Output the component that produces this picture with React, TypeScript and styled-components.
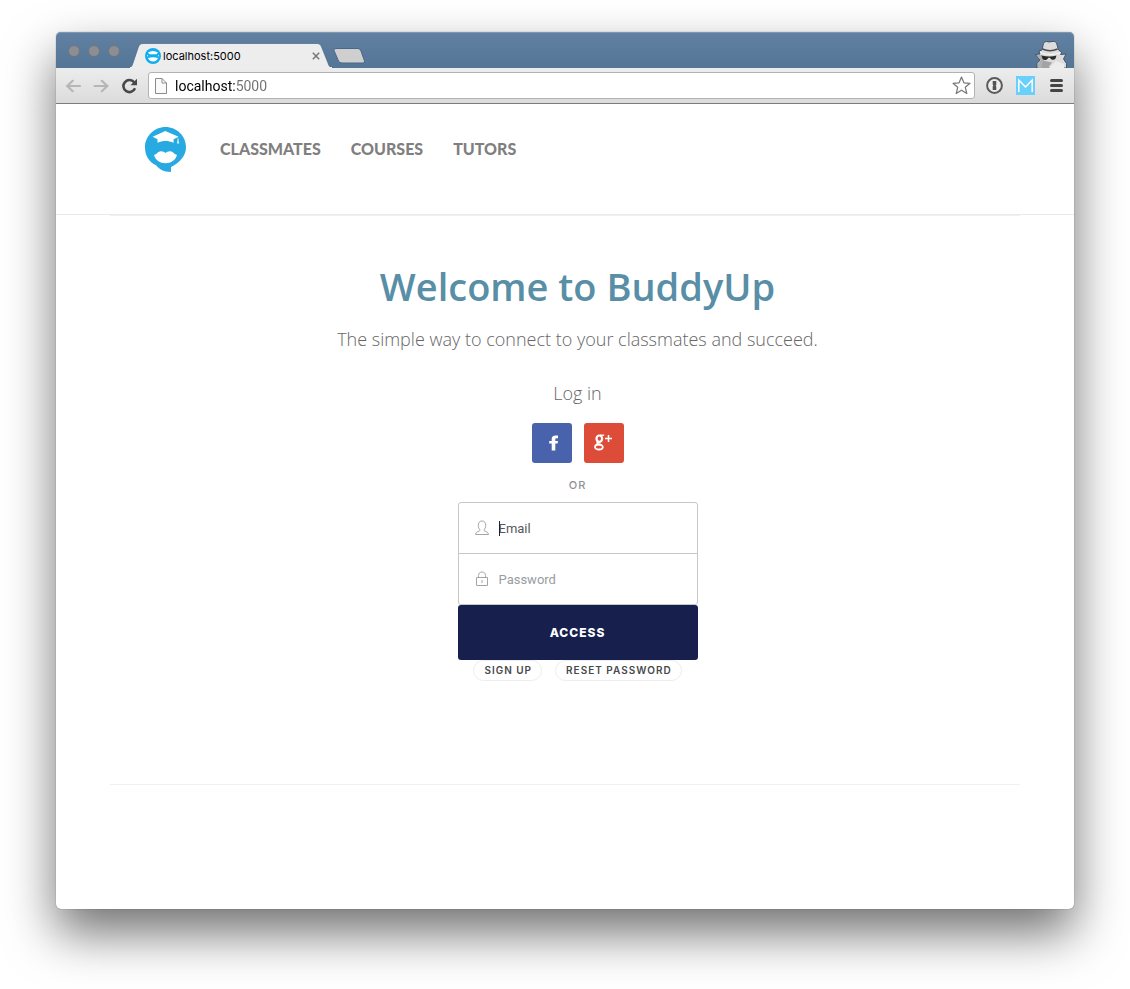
import React from 'react';
import styled, { createGlobalStyle } from 'styled-components';

const GlobalStyle = createGlobalStyle`
  *, *::before, *::after { box-sizing: border-box; }
  body { margin: 0; background: #fff; }
  button, input { font: inherit; margin: 0; padding: 0; border: 0; background: none; }
  button { cursor: pointer; }
  svg { display: block; }
`;

const Desktop = styled.div`
  display: flex;
  min-height: 100vh;
  padding: 32px 56px 80px;
  overflow: hidden;
`;

const BrowserWindow = styled.div`
  display: flex;
  flex: 1;
  flex-direction: column;
  border-radius: 5px;
  background: #fff;
  box-shadow: 0 0 1px rgba(0, 0, 0, 0.6), 0 24px 50px rgba(0, 0, 0, 0.56);
`;

const TitleBar = styled.div`
  display: flex;
  align-items: flex-end;
  height: 36px;
  padding: 0 6px 0 12px;
  border-radius: 5px 5px 0 0;
  background: linear-gradient(#6281a2, #547596);
  box-shadow: inset 0 1px #7d98b3;
`;

const WindowButtons = styled.div`
  display: flex;
  gap: 8px;
  padding-bottom: 11px;
`;

const WindowButton = styled.button`
  width: 12px;
  height: 12px;
  border: 1px solid #71757f;
  border-radius: 50%;
  background: #8d8e94;
`;

const Tab = styled.div`
  position: relative;
  display: flex;
  align-items: center;
  width: 206px;
  height: 25px;
  margin-left: 8px;
  padding: 0 14px 0 17px;
`;

const TabShape = styled.svg`
  position: absolute;
  inset: 0;
`;

const TabTitle = styled.span`
  position: relative;
  flex: 1;
  padding-left: 2px;
  color: #000;
  font: 11px/16px Inter, 'Liberation Sans', sans-serif;
`;

const TabIcon = styled.span`
  position: relative;
`;

const TabClose = styled.button`
  position: relative;
`;

const NewTab = styled.button`
  margin: 0 0 4px -1px;
`;

const Incognito = styled.span`
  margin-left: auto;
`;

const Toolbar = styled.div`
  display: flex;
  align-items: center;
  height: 36px;
  padding: 0 9px;
  border-bottom: 1px solid #7c7c7c;
  background: linear-gradient(#ededed, #dbdbdb);
`;

const Navigation = styled.div`
  display: flex;
  gap: 12px;
`;

const ToolButton = styled.button`
  flex: none;
`;

const AddressBar = styled.div`
  display: flex;
  flex: 1;
  align-items: center;
  height: 27px;
  margin: 0 11px 0 10px;
  padding: 0 3px 0 6px;
  border: 1px solid #b2b2b2;
  border-radius: 3px;
  background: #fff;
`;

const Address = styled.input`
  flex: 1;
  min-width: 0;
  height: 20px;
  margin-left: 8px;
  outline: none;
  background: linear-gradient(90deg, #000 61px, #707070 61px);
  background-clip: text;
  color: transparent;
  font: 14px/20px Roboto, 'Liberation Sans', sans-serif;
`;

const Extensions = styled.div`
  display: flex;
  align-items: center;
  gap: 13px;
`;

const Header = styled.header`
  display: flex;
  align-items: flex-start;
  height: 111px;
  padding: 23px 89px 0;
  border-bottom: 1px solid #e6ebec;
`;

const Nav = styled.nav`
  display: flex;
  gap: 30px;
  margin: 10px 0 0 34px;
`;

const NavLink = styled.a`
  color: #7f7f7f;
  font: 900 16px/24px Lato, sans-serif;
  text-decoration: none;
`;

const Main = styled.main`
  display: flex;
  flex-direction: column;
  align-items: center;
  margin: 0 54px;
  padding: 42px 0 103px 25px;
  border-top: 1px solid #f0f0f0;
  border-bottom: 1px solid #f0f0f0;
  color: #666;
  font-family: 'Open Sans', sans-serif;
`;

const Title = styled.h1`
  margin: 0;
  color: #588ea6;
  font-size: 38px;
  font-weight: 600;
  line-height: 56px;
`;

const Lead = styled.p`
  margin: 12px 0 0;
  font-size: 18px;
  font-weight: 300;
  line-height: 26px;
`;

const LoginHeading = styled.h2`
  margin: 28px 0 0;
  font-size: 18px;
  font-weight: 300;
  line-height: 26px;
`;

const SocialButtons = styled.div`
  display: flex;
  gap: 12px;
  margin-top: 17px;
`;

const SocialButton = styled.button<{ $color: string }>`
  display: grid;
  place-items: center;
  width: 40px;
  height: 40px;
  border-radius: 3px;
  background: ${(p) => p.$color};
`;

const Divider = styled.p`
  margin: 14px 0 9px;
  color: #8f9194;
  font: 500 11px/16px Inter, sans-serif;
  letter-spacing: 1px;
`;

const LoginForm = styled.form`
  display: flex;
  flex-direction: column;
  width: 240px;
  font-family: Inter, sans-serif;
`;

const Fields = styled.div`
  border: 1px solid #c6c8c8;
  border-radius: 3px;
`;

const Field = styled.label`
  position: relative;
  display: flex;
  align-items: center;
  gap: 10px;
  height: 50px;
  padding: 0 16px;

  & + & {
    height: 51px;
    border-top: 1px solid #c6c8c8;
  }
`;

const FieldInput = styled.input<{ $active?: boolean }>`
  flex: 1;
  min-width: 0;
  padding-top: 2px;
  outline: none;
  color: #444;
  font: 13px/20px Roboto, sans-serif;

  &::placeholder {
    color: ${(p) => (p.$active ? '#56585c' : '#999ca1')};
    opacity: 1;
  }
`;

const Caret = styled.span`
  position: absolute;
  left: 40px;
  width: 1px;
  height: 15px;
  background: #222;
`;

const Access = styled.button`
  height: 55px;
  border-radius: 3px;
  background: #17204d;
  color: #fff;
  font-size: 12px;
  font-weight: 800;
  line-height: 20px;
  letter-spacing: 1px;
`;

const FormLinks = styled.div`
  display: flex;
  justify-content: center;
  gap: 13px;
`;

const PillLink = styled.a`
  height: 21px;
  padding: 0 9px 0 10px;
  border: 1px solid #ededee;
  border-radius: 11px;
  color: #48494c;
  font: 600 10px/19px Inter, sans-serif;
  letter-spacing: 1px;
  text-decoration: none;
  white-space: nowrap;
`;

const BuddyLogo = () => (
  <svg width="41" height="45" viewBox="0 0 41 45" role="img" aria-label="BuddyUp">
    <path fill="#27aae1" d="M20.5 0C31.8 0 41 9 41 20.3C41 28.5 35 35.5 26 40V45C19 45 14.500 42.5 11 38.300C4.500 35 0 29 0 20.4C0 9.2 9.2 0 20.5 0Z" />
    <path fill="#fff" d="M20.3 4L33.6 9.7L28.6 12.2V15.8C23.5 13.5 17.500 13.500 12.500 15.800V12.300L7.600 9.700Z" />
    <path fill="#fff" opacity="0.8" d="M32.500 11.200H33.500V13L34.300 16.500H31.900L32.500 13Z" />
    <path fill="#fff" d="M9 28C12.500 27.200 12.500 24.300 16 24.300C18 24.300 19.300 25 20.500 26.100C21.700 25 23 24.300 25 24.300C28.500 24.300 28.500 27.200 32 28C30.500 33.300 26 36.200 20.500 36.200C15 36.200 10.500 33.300 9 28Z" />
  </svg>
);

const SmallLogo = () => (
  <svg width="16" height="16" viewBox="0 0 16 16" aria-hidden="true">
    <circle cx="8" cy="8" r="8" fill="#10aef0" />
    <path fill="#fff" d="M3 4.500Q8 1.500 13 4.500L11.500 6.200H4.500ZM3 10Q8 8.500 13 10Q11.500 13.500 8 13.500Q4.500 13.500 3 10Z" />
    <path stroke="#fff" strokeWidth="1" d="M2 7.800H3M13 7.800H14" />
  </svg>
);

const Arrow = ({ forward = false }: { forward?: boolean }) => (
  <svg width="16" height="14" viewBox="0 0 16 14" fill="none" stroke="#b6b6b6" strokeWidth="2.200" strokeLinecap="round" aria-hidden="true">
    {forward ? <path d="M1.500 7H14M8.800 1.800L14.300 7L8.800 12.200" /> : <path d="M15 7H2.500M7.700 1.800L2.200 7L7.700 12.200" />}
  </svg>
);

export default function App() {
  return (
    <Desktop>
      <GlobalStyle />
      <BrowserWindow>
        <TitleBar>
          <WindowButtons>
            <WindowButton aria-label="Close window" />
            <WindowButton aria-label="Minimize window" />
            <WindowButton aria-label="Zoom window" />
          </WindowButtons>
          <Tab>
            <TabShape width="206" height="25" viewBox="0 0 206 25" aria-hidden="true">
              <path d="M0 25C3 25 4 23 5 20L10 5C11 2 12 0.500 15 0.500H189C192 0.500 193 2 194 5L200 20C201 23 202 25 206 25Z" fill="#ededed" stroke="#49678a" strokeWidth="0.700" />
              <path d="M2 24.500H204" stroke="#ededed" />
            </TabShape>
            <TabIcon><SmallLogo /></TabIcon>
            <TabTitle>localhost:5000</TabTitle>
            <TabClose aria-label="Close tab">
              <svg width="8" height="8" viewBox="0 0 8 8" stroke="#777" strokeWidth="1.500"><path d="M0.800 0.800L7.200 7.200M7.200 0.800L0.800 7.200" /></svg>
            </TabClose>
          </Tab>
          <NewTab aria-label="New tab">
            <svg width="33" height="16" viewBox="0 0 33 16">
              <path d="M3 0.500H25Q27 0.500 28 3L31.500 13Q32 15 30 15H9Q6.500 15 5.500 13L1 2.500Q0.500 0.500 3 0.500Z" fill="#cfcfcf" stroke="#49678a" />
            </svg>
          </NewTab>
          <Incognito>
            <svg width="34" height="28" viewBox="0 0 34 28" role="img" aria-label="Incognito">
              <path d="M8 10L9.500 3.500Q10 1.500 12.500 1.500Q15 2.500 18 1.500Q21.500 0.800 22.500 3L24.500 10L27.500 12L26.500 14.500L32 14L29.500 19L32.500 23.500V28H3V23.500L6 20L1.500 14.500L6 14L5 11Z" fill="#dcdcdc" stroke="#3b4d63" strokeWidth="0.900" />
              <path d="M2.500 15L8 15L10 21L8 28H4V24L6.500 20Z" fill="#b0b0b0" />
              <path d="M9 20.500L7.500 28H14L18 22.500Z" fill="#a3a3a3" />
              <path d="M8.500 9Q16 12.500 23.500 9" fill="none" stroke="#4a4a4a" strokeWidth="1.400" />
              <path d="M6 12.500Q16 16.500 27 12.800" fill="none" stroke="#f4f4f4" strokeWidth="1.200" />
              <path d="M7.500 15.500Q16 17.300 22.500 15.500L21.500 18.500Q20 20.500 17.500 19.500L15.800 17.800H14.300L13 19.500Q10 20.800 8.500 18.800Z" fill="#292929" />
              <path d="M15 28L22 21L30 24V28Z" fill="#ececec" />
            </svg>
          </Incognito>
        </TitleBar>
        <Toolbar>
          <Navigation>
            <ToolButton aria-label="Back"><Arrow /></ToolButton>
            <ToolButton aria-label="Forward"><Arrow forward /></ToolButton>
            <ToolButton aria-label="Reload">
              <svg width="17" height="16" viewBox="0 0 17 16" fill="none">
                <path d="M13.200 4.400A6 6 0 1 0 14 10.300" stroke="#484848" strokeWidth="2.600" />
                <path d="M16 0.800V7.300H9.500Z" fill="#484848" />
              </svg>
            </ToolButton>
          </Navigation>
          <AddressBar>
            <svg width="12" height="16" viewBox="0 0 12 16" fill="#fafafa" stroke="#8b8b8b" aria-hidden="true">
              <path d="M0.500 0.500H7L11.500 5V15.500H0.500ZM7 0.500V5H11.500" />
            </svg>
            <Address aria-label="Address" defaultValue="localhost:5000" spellCheck={false} />
            <ToolButton aria-label="Bookmark">
              <svg width="19" height="19" viewBox="0 0 19 19" fill="#fff" stroke="#777" strokeWidth="1.200" strokeLinejoin="round">
                <path d="M9.500 1L11.900 6.800L18 7.300L13.300 11.300L14.800 17.500L9.500 14.200L4.200 17.500L5.700 11.300L1 7.300L7.100 6.800Z" />
              </svg>
            </ToolButton>
          </AddressBar>
          <Extensions>
            <ToolButton aria-label="Password manager">
              <svg width="17" height="17" viewBox="0 0 17 17">
                <circle cx="8.500" cy="8.500" r="7.400" fill="#eee" stroke="#5b5b5b" strokeWidth="2" />
                <path d="M6.700 4H10.300V8L9.600 8.700L10.300 9.400V13H6.700V9.200L7.400 8.500L6.700 7.800Z" fill="#555" />
              </svg>
            </ToolButton>
            <ToolButton aria-label="Mail">
              <svg width="19" height="19" viewBox="0 0 19 19">
                <rect width="19" height="19" fill="#68d0fa" />
                <path d="M2.800 16V4L9.500 11L16.200 4V16" fill="none" stroke="#fff" strokeWidth="1.500" />
              </svg>
            </ToolButton>
            <ToolButton aria-label="Menu">
              <svg width="17" height="13" viewBox="0 0 17 13" stroke="#454545" strokeWidth="3" strokeLinecap="round">
                <path d="M3.500 1.500H13.500M3.500 6.500H13.500M3.500 11.500H13.500" />
              </svg>
            </ToolButton>
          </Extensions>
        </Toolbar>
        <Header>
          <BuddyLogo />
          <Nav>
            <NavLink href="#classmates">CLASSMATES</NavLink>
            <NavLink href="#courses">COURSES</NavLink>
            <NavLink href="#tutors">TUTORS</NavLink>
          </Nav>
        </Header>
        <Main>
          <Title>Welcome to BuddyUp</Title>
          <Lead>The simple way to connect to your classmates and succeed.</Lead>
          <LoginHeading>Log in</LoginHeading>
          <SocialButtons>
            <SocialButton $color="#4862ab" aria-label="Log in with Facebook">
              <svg width="12" height="16" viewBox="0 0 12 16" fill="#fff">
                <path d="M12 0.500V3.300H10.300Q9.300 3.300 9.300 4.500V6H12L11.600 8.600H9.300V15.500H5.700V8.600H3.200V6H5.700V4Q5.700 0.500 9.500 0.500Z" />
              </svg>
            </SocialButton>
            <SocialButton $color="#dd4c39" aria-label="Log in with Google Plus">
              <svg width="20" height="18" viewBox="0 0 20 18" fill="none" stroke="#fff">
                <ellipse cx="5.300" cy="4.700" rx="2.800" ry="3.200" strokeWidth="2.200" />
                <path d="M6 1.200H10.200" strokeWidth="1.300" />
                <path d="M4 7.800Q2.200 9.300 4.500 10.200L7 10.800" strokeWidth="1.900" />
                <ellipse cx="4.900" cy="13" rx="3.900" ry="2.500" strokeWidth="1.800" />
                <path d="M11 4.500H18M14.500 1V8" strokeWidth="1.500" />
              </svg>
            </SocialButton>
          </SocialButtons>
          <Divider>OR</Divider>
          <LoginForm onSubmit={(e) => e.preventDefault()}>
            <Fields>
              <Field>
                <svg width="14" height="16" viewBox="0 0 14 16" fill="none" stroke="#a5a5a5" aria-hidden="true">
                  <path d="M5.200 10.200C3.900 9 3.300 7.300 3.300 5.300C3.300 2.500 4.800 1 7 1S10.700 2.500 10.700 5.300C10.700 7.300 10.100 9 8.800 10.200C9 11.500 13.500 11.200 13.500 14.500H0.500C0.500 11.200 5 11.500 5.200 10.200Z" />
                </svg>
                <Caret />
                <FieldInput $active type="email" placeholder="Email" aria-label="Email" />
              </Field>
              <Field>
                <svg width="14" height="16" viewBox="0 0 14 16" fill="none" stroke="#a5a5a5" aria-hidden="true">
                  <path d="M1.500 6.500H12.500V14.500H1.500ZM3.500 6.500V4.500C3.500 2.500 4.800 1 7 1S10.500 2.500 10.500 4.500V6.500M7 9V12" />
                </svg>
                <FieldInput type="password" placeholder="Password" aria-label="Password" />
              </Field>
            </Fields>
            <Access type="submit">ACCESS</Access>
            <FormLinks>
              <PillLink href="#signup">SIGN UP</PillLink>
              <PillLink href="#reset">RESET PASSWORD</PillLink>
            </FormLinks>
          </LoginForm>
        </Main>
      </BrowserWindow>
    </Desktop>
  );
}
